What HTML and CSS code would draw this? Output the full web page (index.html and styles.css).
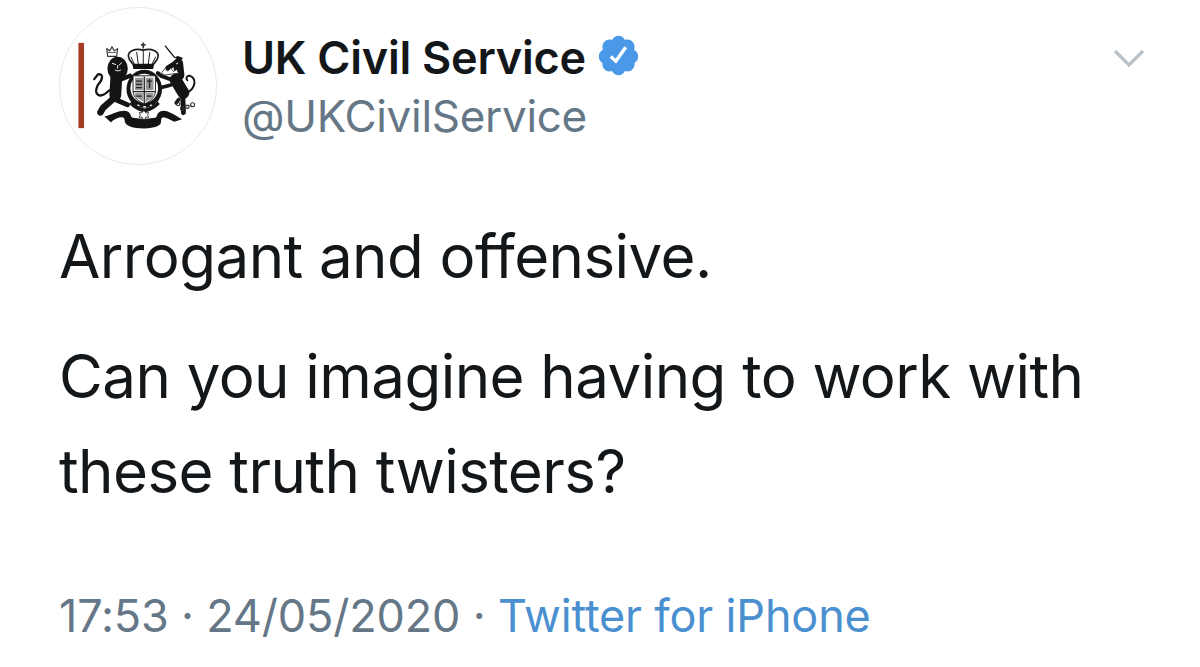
FILE: index.html
```html
<!DOCTYPE html>
<html lang="en">
<head>
<meta charset="utf-8">
<title>UK Civil Service tweet</title>
<link rel="stylesheet" href="styles.css">
</head>
<body>
<main class="tweet">
  <header class="head">
    <div class="avatar">
      <svg class="crest" viewBox="57 22 474 474" aria-hidden="true">
        <rect x="113" y="128" width="17" height="259" fill="#a63c25"/>
        <!-- royal crown -->
        <path d="M310 127v18M303 134h14" stroke="#333" stroke-width="5" fill="none"/>
        <path d="M310 150c-24-6-48 2-45 20 1 10 9 16 15 24h60c6-8 14-14 15-24 3-18-21-26-45-20z" fill="#fff" stroke="#1a1a1a" stroke-width="5"/>
        <path d="M310 150v44M290 156l5 38M330 156l-5 38M272 170l12 24M348 170l-12 24" stroke="#1a1a1a" stroke-width="3" fill="none"/>
        <path d="M277 193h66l-3 14h-60z" fill="#111"/>
        <!-- lion -->
        <g fill="none" stroke="#141414" stroke-linecap="round" stroke-linejoin="round">
          <path d="M228 235l-3 52" stroke-width="36"/>
          <path d="M222 295l-34 30-8 14" stroke-width="20"/>
          <path d="M230 302l32 14" stroke-width="15"/>
          <path d="M240 240l30-12" stroke-width="13"/>
          <path d="M207 272C176 302 158 284 172 256 190 236 188 220 172 224L161 238" stroke-width="7"/>
        </g>
        <ellipse cx="232" cy="206" rx="31" ry="36" fill="#141414"/>
        <path d="M215 190l12 4M245 188l-9 8M224 210c6 4 12 4 18 0M232 196v10" stroke="#fff" stroke-width="3" fill="none"/>
        <path d="M199 146l9 6 7-12 7 12 10-6-3 23h-27z" fill="#fff" stroke="#333" stroke-width="3.5"/>
        <path d="M202 157h26" stroke="#555" stroke-width="3"/>
        <!-- shield -->
        <ellipse cx="313" cy="268" rx="54" ry="58" fill="#141414"/>
        <ellipse cx="313" cy="266" rx="42" ry="44" fill="#fff"/>
        <path d="M279 228h68v46c0 20-18 32-34 40-16-8-34-20-34-40z" fill="#fff" stroke="#222" stroke-width="3"/>
        <path d="M285 234h24v38h-24zM317 234h24v38h-24zM285 280h24v26l-24-14zM317 280h24v12l-24 16z" fill="#999"/>
        <path d="M313 230v84M279 276h68" stroke="#222" stroke-width="4"/>
        <path d="M288 244h18M288 254h18M288 264h18M321 244h16M329 238v28M321 290h14M289 290h16" stroke="#222" stroke-width="4"/>
        <path d="M274 306c12 12 24 19 40 21 16-2 28-9 40-21l6 8c-14 14-28 23-46 25-18-2-32-11-46-25z" fill="#141414"/>
        <path d="M292 316l7 3M310 322h8M330 319l6-3" stroke="#fff" stroke-width="4"/>
        <!-- unicorn -->
        <g fill="none" stroke="#141414" stroke-linecap="round" stroke-linejoin="round">
          <path d="M377 138l28 34" stroke-width="4"/>
          <path d="M416 190l4 36" stroke-width="30"/>
          <path d="M410 188l-25 16" stroke-width="15"/>
          <path d="M408 240l24 40" stroke-width="36"/>
          <path d="M396 240l-32-12-10-8" stroke-width="12"/>
          <path d="M394 256l-32 8" stroke-width="11"/>
          <path d="M430 290l2 50" stroke-width="15"/>
          <path d="M446 278C470 262 472 236 452 228 442 226 438 236 444 242" stroke-width="6"/>
          <path d="M418 300l-8 10" stroke-width="11"/>
        </g>
        <path d="M405 172l10-4 16 6-10 10z" fill="#141414"/>
        <path d="M366 218l10-12 8 8 10-9 8 10 10-7 5 12-44 6z" fill="#fff" stroke="#222" stroke-width="2.5"/>
        <path d="M410 192l6-3" stroke="#fff" stroke-width="3"/>
        <g fill="none" stroke="#333" stroke-width="3.5">
          <circle cx="416" cy="314" r="5"/><circle cx="428" cy="327" r="5"/><circle cx="460" cy="316" r="6"/><circle cx="444" cy="322" r="5"/>
          <path d="M432 322l8-1M450 320l4-1"/>
        </g>
        <!-- ribbon -->
        <path d="M192 352c24-8 42-18 60-18 14 0 20 10 22 20 20 6 56 6 76 0 2-10 8-20 22-20 16 0 34 14 56 26l-24 8c-12-6-24-14-34-14-6 2-6 8-6 14 0 12-18 20-52 20s-54-6-58-20c0-8-2-14-10-14-12 0-26 8-32 16z" fill="#141414"/>
        <path d="M312 333l6 8 8-2-3 9 4 6h-10v6h-10v-6h-10l4-6-3-9 8 2z" fill="#fff" stroke="#222" stroke-width="2.5"/>
      </svg>
    </div>
    <div class="who">
      <div class="name">UK Civil Service
        <svg class="badge" viewBox="0 0 24 24" aria-hidden="true"><path fill="#4a99e9" d="M22.5 12.5c0-1.58-.875-2.95-2.148-3.6.154-.435.238-.905.238-1.4 0-2.21-1.71-3.998-3.818-3.998-.47 0-.92.084-1.336.25C14.818 2.415 13.51 1.5 12 1.5s-2.816.917-3.437 2.25c-.415-.165-.866-.25-1.336-.25-2.11 0-3.818 1.79-3.818 4 0 .494.083.964.237 1.4-1.272.65-2.147 2.018-2.147 3.6 0 1.495.782 2.798 1.942 3.486-.02.17-.032.34-.032.514 0 2.21 1.708 4 3.818 4 .47 0 .92-.086 1.335-.25.62 1.334 1.926 2.25 3.437 2.25 1.512 0 2.818-.916 3.437-2.25.415.163.865.248 1.336.248 2.11 0 3.818-1.79 3.818-4 0-.174-.012-.344-.033-.513 1.158-.687 1.943-1.99 1.943-3.484z"/><path fill="#fff" d="M16.6 8.1l-5.9 8.3-3.4-3.2 1.2-1.3 1.9 1.8 4.7-6.6z"/></svg>
      </div>
      <div class="handle">@UKCivilService</div>
    </div>
    <svg class="chevron" viewBox="0 0 32 20" aria-hidden="true"><path d="M2 3l14 14L30 3" fill="none" stroke="#b8c0c8" stroke-width="3.2"/></svg>
  </header>
  <div class="body">
    <p class="line">Arrogant and offensive.</p>
    <p class="line">Can you imagine having to work with<br>these truth twisters?</p>
  </div>
  <footer class="meta">17:53 · 24/05/2020 · <span class="source">Twitter for iPhone</span></footer>
</main>
</body>
</html>
```
FILE: styles.css
```css
html, body {
  margin: 0;
  background: #fff;
}
body {
  width: 1200px;
  height: 667px;
  overflow: hidden;
  font-family: Inter, "Liberation Sans", sans-serif;
  color: #14171a;
}
.tweet {
  padding: 7px 0 0 59px;
  display: flex;
  flex-direction: column;
}
.head {
  display: flex;
  align-items: flex-start;
}
.avatar {
  width: 158px;
  height: 158px;
  border-radius: 50%;
  border: 1px solid #e9e9ea;
  box-sizing: border-box;
  flex: none;
  overflow: hidden;
}
.crest {
  display: block;
  width: 100%;
  height: 100%;
}
.who {
  margin-left: 25px;
  padding-top: 26px;
  flex: none;
  width: 868px;
}
.name {
  display: flex;
  align-items: center;
  font-size: 45px;
  line-height: 50px;
  font-weight: 600;
  letter-spacing: -0.25px;
  color: #14171a;
}
.badge {
  width: 45px;
  height: 45px;
  margin: -5px 0 0 10px;
}
.handle {
  font-size: 44px;
  line-height: 50px;
  margin-top: 8px;
  color: #657786;
  letter-spacing: -0.3px;
}
.chevron {
  width: 32px;
  height: 20px;
  margin: 41px 0 0 3px;
  flex: none;
}
.body {
  margin-top: 44px;
}
.line {
  margin: 0 0 25px;
  font-size: 60px;
  line-height: 95px;
  letter-spacing: -0.55px;
}
.meta {
  margin-top: 47px;
  font-size: 45px;
  line-height: 50px;
  letter-spacing: -0.17px;
  color: #657786;
}
.source {
  color: #4a90d0;
}
```
